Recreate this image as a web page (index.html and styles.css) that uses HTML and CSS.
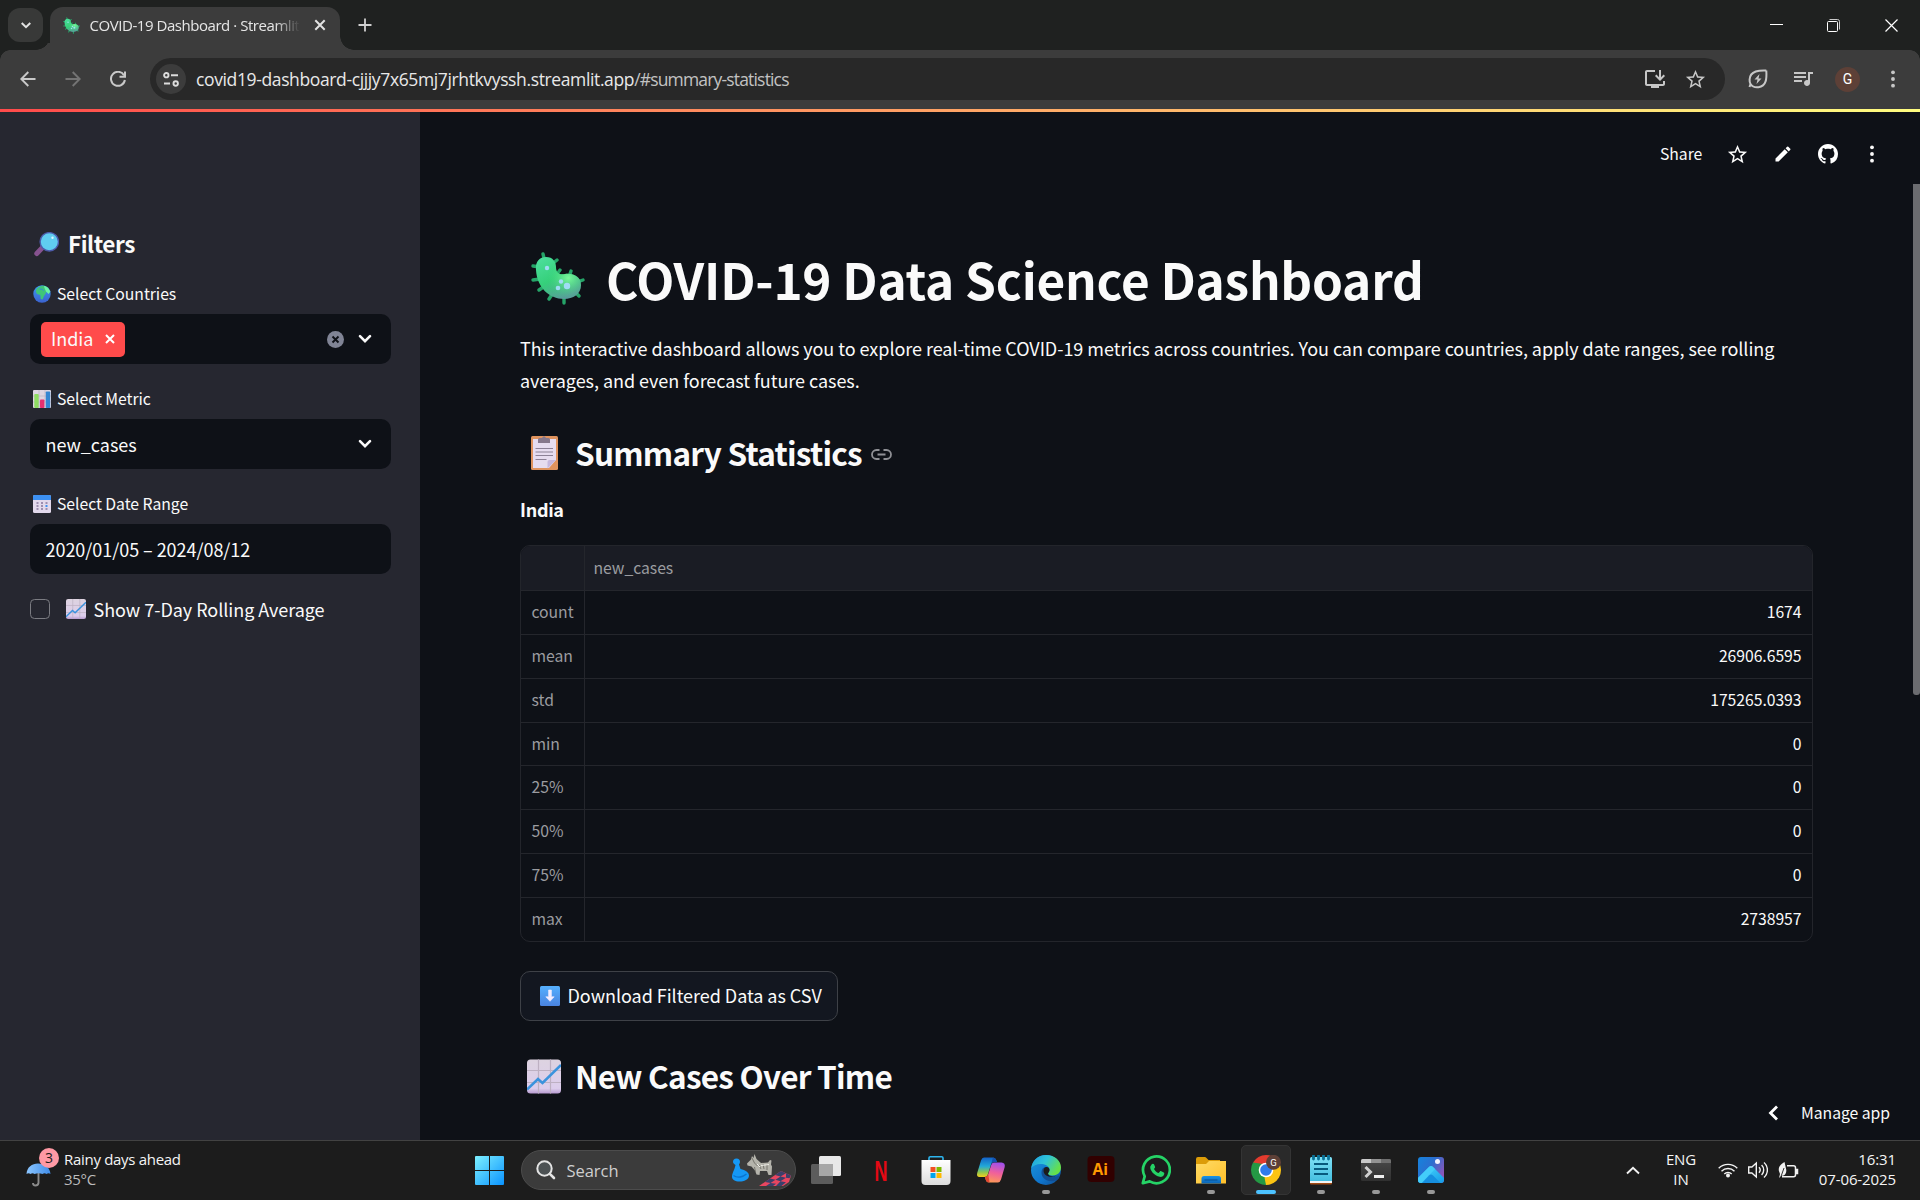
FILE: index.html
```html
<!DOCTYPE html>
<html lang="en">
<head>
<meta charset="utf-8">
<title>COVID-19 Dashboard · Streamlit</title>
<link rel="stylesheet" href="styles.css">
</head>
<body>
<svg class="defs" width="0" height="0">
  <defs>
    <linearGradient id="gGerm" x1="0" y1="0" x2=".6" y2="1"><stop offset="0" stop-color="#4fe0a0"/><stop offset=".55" stop-color="#35d07a"/><stop offset="1" stop-color="#5b9a9c"/></linearGradient>
    <radialGradient id="gGermLight" cx=".72" cy=".5" r=".5"><stop offset="0" stop-color="#7bf79a"/><stop offset="1" stop-color="#35d07a" stop-opacity="0"/></radialGradient>
    <linearGradient id="gPaper" x1="0" y1="0" x2="0" y2="1"><stop offset="0" stop-color="#ddd3e0"/><stop offset=".85" stop-color="#dccdec"/><stop offset="1" stop-color="#b79bd0"/></linearGradient>
    <linearGradient id="gGlobe" x1="0" y1="0" x2="0" y2="1"><stop offset="0" stop-color="#3d9af0"/><stop offset="1" stop-color="#3b62cf"/></linearGradient>
    <linearGradient id="gBlue" x1="0" y1="0" x2="0" y2="1"><stop offset="0" stop-color="#55b0ff"/><stop offset="1" stop-color="#4a83e0"/></linearGradient>
    <linearGradient id="gWin" x1="0" y1="0" x2="1" y2="1"><stop offset="0" stop-color="#7df0ff"/><stop offset="1" stop-color="#0a93ff"/></linearGradient>
    <linearGradient id="gFolder" x1="0" y1="0" x2="1" y2="1"><stop offset="0" stop-color="#ffdb66"/><stop offset="1" stop-color="#ffc02a"/></linearGradient>
    <linearGradient id="gTray" x1="0" y1="0" x2="0" y2="1"><stop offset="0" stop-color="#1a94e6"/><stop offset="1" stop-color="#0b63b5"/></linearGradient>
    <linearGradient id="gEdgeTop" x1="0" y1="0" x2="1" y2=".5"><stop offset="0" stop-color="#1d9fdf"/><stop offset=".5" stop-color="#2fc3d8"/><stop offset="1" stop-color="#66e04a"/></linearGradient>
    <linearGradient id="gEdgeLow" x1="0" y1="0" x2="1" y2="1"><stop offset="0" stop-color="#1b97dc"/><stop offset=".6" stop-color="#0f74cc"/><stop offset="1" stop-color="#114a8b"/></linearGradient>
    <linearGradient id="gCopA" x1="0" y1="0" x2="0" y2="1"><stop offset="0" stop-color="#1462c8"/><stop offset=".45" stop-color="#22a8d8"/><stop offset=".75" stop-color="#8cc651"/><stop offset="1" stop-color="#f5cf1c"/></linearGradient>
    <linearGradient id="gCopB" x1=".5" y1="0" x2=".3" y2="1"><stop offset="0" stop-color="#a250ea"/><stop offset=".5" stop-color="#f0609b"/><stop offset="1" stop-color="#fd9a55"/></linearGradient>
    <linearGradient id="gPhoto" x1="0" y1="0" x2="1" y2=".6"><stop offset="0" stop-color="#1583dd"/><stop offset=".5" stop-color="#2b6fd0"/><stop offset="1" stop-color="#8c55b8"/></linearGradient>
    <linearGradient id="gHill" x1="0" y1="0" x2="1" y2="1"><stop offset="0" stop-color="#4fdcff"/><stop offset="1" stop-color="#149ae8"/></linearGradient>
    <linearGradient id="gStore" x1="0" y1="0" x2="0" y2="1"><stop offset="0" stop-color="#ffffff"/><stop offset="1" stop-color="#dcdcdc"/></linearGradient>
    <linearGradient id="gTerm" x1="0" y1="0" x2="0" y2="1"><stop offset="0" stop-color="#4a4a4a"/><stop offset="1" stop-color="#303030"/></linearGradient>
    <linearGradient id="gNote" x1="0" y1="0" x2="0" y2="1"><stop offset="0" stop-color="#7ee0f5"/><stop offset="1" stop-color="#45bfe0"/></linearGradient>
    <linearGradient id="gUmb" x1="0" y1="0" x2="1" y2="0"><stop offset="0" stop-color="#8cc6ff"/><stop offset="1" stop-color="#3f8ce8"/></linearGradient>

    <symbol id="germ" viewBox="0 0 54 53">
      <g stroke="#25a468" stroke-width="3.4" stroke-linecap="round">
        <path d="M12 2l2 8M2 14l7 1M2 28l7-1M8 38l6-4M18 47l4-6M33 51l0-7M48 44l-5-5M52 28l-6 2M40 19l-2 6M29 18l-3 4M26 8l-5 4"/>
      </g>
      <path d="M5 18C4 9 9 5 15 5c7 0 10 5 10 10 0 6 3 8 9 7 9-1 16 3 16 11 0 9-8 14-17 14C18 47 6 35 5 18z" fill="url(#gGerm)"/>
      <path d="M5 18C4 9 9 5 15 5c7 0 10 5 10 10 0 6 3 8 9 7 9-1 16 3 16 11 0 9-8 14-17 14C18 47 6 35 5 18z" fill="url(#gGermLight)"/>
      <g fill="#9fdcf5"><circle cx="16" cy="16" r="2.2"/><circle cx="30" cy="29.5" r="2.2"/><circle cx="36" cy="34" r="3.2"/><circle cx="27" cy="36" r="2.3"/></g>
    </symbol>
    <symbol id="lens" viewBox="0 0 25 25">
      <path d="M9 15l-6.2 6.5" stroke="#86528f" stroke-width="5" stroke-linecap="round"/>
      <circle cx="15.3" cy="9.8" r="9.2" fill="#60cdf0" stroke="#4d5bab" stroke-width="1.4"/>
      <circle cx="18.5" cy="5.8" r="1.2" fill="#d5f6ff"/>
    </symbol>
    <symbol id="globe" viewBox="0 0 18 18">
      <circle cx="9" cy="9" r="8.7" fill="url(#gGlobe)"/>
      <path d="M3.500 4C5 2 8 .6 11 .8l1 2.500 1.500 3.500-1 2-1.500 2.200-1.500 3.500-1.800-.5-.4-4L4 9 2.800 6.500z" fill="#3fc679"/>
      <path d="M11 .8c3 .6 5.500 3 6.300 6l-1.800 2.200-2.500-2.500L11.500 3z" fill="#6cf5a4"/>
      <path d="M6.500 4l3 .3 1 1.500" stroke="#3a86dd" fill="none"/>
    </symbol>
    <symbol id="bars" viewBox="0 0 18 18">
      <rect width="18" height="18" rx="1" fill="#ddd6e2"/>
      <path d="M6 0v18M12 0v18M0 6h18M0 12h18" stroke="#c2b8c8" stroke-width=".8"/>
      <rect x="1.300" y="4" width="4.400" height="14" rx=".8" fill="#8fdc62"/>
      <rect x="7" y="9.500" width="4.400" height="8.500" rx=".8" fill="#e5306f"/>
      <rect x="12.800" y="1.500" width="4.400" height="16.500" rx=".8" fill="#3486d2"/>
    </symbol>
    <symbol id="calendar" viewBox="0 0 18 18">
      <rect width="18" height="18" rx="1.500" fill="#e2d9ec"/>
      <path d="M0 5V1.500A1.500 1.500 0 011.500 0h15A1.500 1.500 0 0118 1.500V5z" fill="#3c90f2"/>
      <g fill="#9d8fb0"><path d="M3.500 7h2v2h-2zM8 7h2v2H8zM3.500 10h2v2h-2zM8 10h2v2H8zM12.500 7h2v2h-2zM3.500 13h2v2h-2zM8 13h2v2H8zM12.500 13h2v2h-2z"/></g>
      <path d="M12.500 10h2v2h-2z" fill="#3c90f2"/>
    </symbol>
    <symbol id="chart" viewBox="0 0 34 34">
      <rect width="34" height="34" rx="3.500" fill="url(#gPaper)"/>
      <path d="M11.500 0v34M23.500 0v34M0 11h34M0 23h34" stroke="#bdb0c2" stroke-width="1.200"/>
      <path d="M0 30l11-10.500 4.500 4L34 5.500" fill="none" stroke="#3b93dd" stroke-width="2.500"/>
    </symbol>
    <symbol id="clipboard" viewBox="0 0 27 35">
      <rect y="1" width="27" height="34" rx="1.500" fill="#df935e"/>
      <path d="M2 4h23v21l-7 8H2z" fill="#e6dcef"/>
      <path d="M25 25l-8.500 8.500V27q0-2 2-2z" fill="#c6b7dd"/>
      <path d="M7 8V4.500Q7 3 8.500 3H11q2-3.500 4 0h2.500Q19 3 19 4.500V8z" fill="#86788c"/>
      <path d="M4.500 13.500h17.500M4.500 17h17.500M4.500 20.500h17.500M4.500 24.500h11" stroke="#8c8196" stroke-width="1.100"/>
    </symbol>
    <symbol id="download" viewBox="0 0 20 20">
      <rect width="20" height="20" rx="1.500" fill="url(#gBlue)"/>
      <path d="M8.600 4h2.800v6.800h2.800L10 15.300 5.800 10.800h2.800z" fill="#f3edff" stroke="#f3edff" stroke-width=".6" stroke-linejoin="round"/>
    </symbol>
    <symbol id="star" viewBox="0 0 24 24"><path d="M22 9.240l-7.190-.62L12 2 9.190 8.630 2 9.240l5.460 4.730L5.820 21 12 17.270 18.180 21l-1.630-7.030L22 9.240zM12 15.400l-3.760 2.270 1-4.280-3.320-2.880 4.380-.38L12 6.100l1.710 4.040 4.380.38-3.320 2.880 1 4.280L12 15.400z" fill="currentColor"/></symbol>
    <symbol id="dots" viewBox="0 0 24 24"><g fill="currentColor"><circle cx="12" cy="4" r="2.300"/><circle cx="12" cy="12" r="2.300"/><circle cx="12" cy="20" r="2.300"/></g></symbol>
    <symbol id="chevron" viewBox="0 0 14 10"><path d="M2 2.200l5 5 5-5" fill="none" stroke="currentColor" stroke-width="2.600" stroke-linecap="round"/></symbol>
  </defs>
</svg>

<header class="tabstrip">
  <button class="tab-search"><svg width="12" height="9" viewBox="0 0 14 10"><path d="M2 2l5 5 5-5" fill="none" stroke="#e3e3e3" stroke-width="2.300"/></svg></button>
  <div class="tab">
    <svg width="17" height="17"><use href="#germ"/></svg>
    <span class="tab-title">COVID-19 Dashboard · Streamlit</span>
    <svg class="tab-close" width="12" height="12" viewBox="0 0 12 12"><path d="M1.300 1.300l9.400 9.400M10.700 1.300l-9.400 9.400" stroke="#e3e3e3" stroke-width="2"/></svg>
  </div>
  <svg class="tab-new" width="14" height="14" viewBox="0 0 14 14"><path d="M7 .5v13M.5 7h13" stroke="#d0d0d0" stroke-width="1.800"/></svg>
  <div class="window-controls">
    <span><svg width="13" height="13" viewBox="0 0 13 13"><path d="M0 5.500h13" stroke="#fff"/></svg></span>
    <span><svg width="13" height="13" viewBox="0 0 13 13"><path d="M2.500.5h8q2 0 2 2v8" fill="none" stroke="#ccc"/><rect x=".5" y="2.500" width="10" height="10" rx="1" fill="none" stroke="#fff"/></svg></span>
    <span><svg width="13" height="13" viewBox="0 0 13 13"><path d="M.5.5l12 12M12.500.5l-12 12" stroke="#fff" stroke-width="1.200"/></svg></span>
  </div>
</header>

<nav class="toolbar">
  <div class="nav-icons">
    <span><svg width="16" height="16" viewBox="0 0 16 16"><path d="M15.500 8H1.500M8.300 1L1.300 8l7 7" fill="none" stroke="#c9c9c9" stroke-width="1.900"/></svg></span>
    <span><svg width="16" height="16" viewBox="0 0 16 16"><path d="M.5 8h14M7.700 1l7 7-7 7" fill="none" stroke="#747474" stroke-width="1.900"/></svg></span>
    <span><svg width="16" height="16" viewBox="0 0 16 16"><path d="M14 4.200A7 7 0 1014.900 9M15 .5v5.300H9.500" fill="none" stroke="#c9c9c9" stroke-width="2"/></svg></span>
  </div>
  <div class="omnibox">
    <span class="site-info"><svg width="16" height="15" viewBox="0 0 16 15"><g fill="none" stroke="#dcdcdc" stroke-width="1.900"><circle cx="3.300" cy="3.200" r="2.200"/><path d="M8 3.200h7M1 11.500h6"/><circle cx="12.700" cy="11.500" r="2.200"/></g></svg></span>
    <span class="url">covid19-dashboard-cjjjy7x65mj7jrhtkvyssh.streamlit.app<span class="url-path">/#summary-statistics</span></span>
    <span class="omni-icon"><svg width="24" height="24" viewBox="0 0 24 24"><path d="M20 17H4V5h8V3H4c-1.100 0-2 .9-2 2v12c0 1.100.9 2 2 2h4v2h8v-2h4c1.100 0 2-.9 2-2v-3h-2v3zM17 14l5-5-1.410-1.410L18 10.170V3h-2v7.170l-2.590-2.580L12 9l5 5z" fill="#c7c7c7"/></svg></span>
    <span class="omni-icon"><svg width="23" height="23"><use href="#star"/></svg></span>
  </div>
  <div class="tool-icons">
    <span><svg width="20" height="20" viewBox="0 0 20 20"><path d="M18.300 1.500C12 1.200 2 1.500 1.600 10.500c-.1 1.800.3 3.500.9 4.600L1.500 18M2.500 15c2 3 5.500 3.500 8 3.200 8-1 8.300-9 7.800-16.700" fill="none" stroke="#c7c7c7" stroke-width="2"/><path d="M11.500 5L6.500 10.500h3L8.500 15l5-5.500h-3z" fill="#c7c7c7"/></svg></span>
    <span><svg width="24" height="24" viewBox="0 0 24 24"><path d="M15 5H3v2h12V5zm0 4H3v2h12V9zM3 15h8v-2H3v2zM17 5v8.180c-.31-.11-.65-.18-1-.18-1.660 0-3 1.340-3 3s1.340 3 3 3 3-1.340 3-3V7h3V5h-5z" fill="#c7c7c7"/></svg></span>
    <span><b class="avatar">G</b></span>
    <span><svg width="20" height="20"><use href="#dots"/></svg></span>
  </div>
</nav>
<div class="decoration"></div>

<div class="app">
  <aside class="sidebar">
    <h2 class="side-title"><svg width="25" height="25"><use href="#lens"/></svg><span>Filters</span></h2>

    <div class="label"><svg width="18" height="18"><use href="#globe"/></svg><span>Select Countries</span></div>
    <div class="field">
      <span class="tag"><span>India</span><svg width="10" height="10" viewBox="0 0 10 10"><path d="M1 1l8 8M9 1L1 9" stroke="#fff" stroke-width="2"/></svg></span>
      <svg class="clear" width="17" height="17" viewBox="0 0 17 17"><circle cx="8.500" cy="8.500" r="8.500" fill="#808495"/><path d="M5.500 5.500l6 6M11.500 5.500l-6 6" stroke="#0e1117" stroke-width="1.900"/></svg>
      <svg class="chev" width="14" height="10"><use href="#chevron"/></svg>
    </div>

    <div class="label"><svg width="18" height="18"><use href="#bars"/></svg><span>Select Metric</span></div>
    <div class="field"><span class="value">new_cases</span><svg class="chev" width="14" height="10"><use href="#chevron"/></svg></div>

    <div class="label"><svg width="18" height="18"><use href="#calendar"/></svg><span>Select Date Range</span></div>
    <div class="field"><span class="value">2020/01/05 – 2024/08/12</span></div>

    <div class="check"><i class="box"></i><svg width="20" height="20"><use href="#chart"/></svg><span>Show 7-Day Rolling Average</span></div>
  </aside>

  <main class="main">
    <div class="app-actions">
      <span class="share">Share</span>
      <span class="act"><svg width="23" height="23"><use href="#star"/></svg></span>
      <span class="act"><svg width="20" height="20" viewBox="0 0 24 24"><path d="M3 17.250V21h3.750L17.810 9.940l-3.750-3.750L3 17.250zM20.710 7.040a1 1 0 000-1.410l-2.340-2.340a1 1 0 00-1.410 0l-1.830 1.830 3.750 3.750 1.830-1.830z" fill="#fff"/></svg></span>
      <span class="act"><svg width="20" height="20" viewBox="0 0 16 16"><path d="M8 0C3.580 0 0 3.580 0 8c0 3.540 2.290 6.530 5.470 7.590.4.070.55-.17.55-.38 0-.19-.01-.82-.01-1.490-2.010.37-2.530-.49-2.690-.94-.09-.23-.48-.94-.82-1.130-.28-.15-.68-.52-.01-.53.63-.01 1.080.58 1.230.82.72 1.210 1.870.87 2.330.66.07-.52.28-.87.51-1.070-1.780-.2-3.640-.89-3.640-3.950 0-.87.31-1.590.82-2.150-.08-.2-.36-1.020.08-2.120 0 0 .67-.21 2.200.82.64-.18 1.320-.27 2-.27.68 0 1.360.09 2 .27 1.530-1.040 2.200-.82 2.200-.82.44 1.100.16 1.920.08 2.120.51.56.82 1.270.82 2.150 0 3.070-1.870 3.750-3.650 3.950.29.25.54.73.54 1.480 0 1.070-.01 1.930-.01 2.200 0 .21.15.46.55.38A8.013 8.013 0 0016 8c0-4.420-3.580-8-8-8z" fill="#fff"/></svg></span>
      <span class="act"><svg width="20" height="20"><use href="#dots"/></svg></span>
    </div>

    <div class="content">
      <h1><svg width="54" height="53"><use href="#germ"/></svg><span>COVID-19 Data Science Dashboard</span></h1>
      <p class="intro">This interactive dashboard allows you to explore real-time COVID-19 metrics across countries. You can compare countries, apply date ranges, see rolling<br>averages, and even forecast future cases.</p>
      <h2 class="section s-summary"><svg width="27" height="35"><use href="#clipboard"/></svg><span class="t-summary">Summary Statistics</span>
        <svg class="anchor" width="21" height="11" viewBox="0 0 21 11"><path d="M8.500 1H5.500a4.500 4.500 0 000 9h3M12.500 1h3a4.500 4.500 0 010 9h-3M6.500 5.500h8" fill="none" stroke="#8f9095" stroke-width="1.800"/></svg></h2>
      <p class="country">India</p>

      <div class="table">
        <div class="row head"><span class="idx"></span><span class="col">new_cases</span></div>
        <div class="row"><span class="idx">count</span><span class="num">1674</span></div>
        <div class="row"><span class="idx">mean</span><span class="num">26906.6595</span></div>
        <div class="row"><span class="idx">std</span><span class="num">175265.0393</span></div>
        <div class="row"><span class="idx">min</span><span class="num">0</span></div>
        <div class="row"><span class="idx">25%</span><span class="num">0</span></div>
        <div class="row"><span class="idx">50%</span><span class="num">0</span></div>
        <div class="row"><span class="idx">75%</span><span class="num">0</span></div>
        <div class="row"><span class="idx">max</span><span class="num">2738957</span></div>
      </div>

      <button class="download"><svg width="20" height="20"><use href="#download"/></svg><span>Download Filtered Data as CSV</span></button>
      <h2 class="section s-new"><svg width="34" height="35"><use href="#chart"/></svg><span class="t-new">New Cases Over Time</span></h2>
    </div>
    <div class="scrollbar"></div>
    <div class="manage"><svg width="11" height="16" viewBox="0 0 11 16"><path d="M9 1.500L2.500 8 9 14.500" fill="none" stroke="#fff" stroke-width="2.800"/></svg><span>Manage app</span></div>
  </main>
</div>

<footer class="taskbar">
  <div class="weather">
    <div class="umbrella">
      <svg width="25" height="25" viewBox="0 0 25 25"><path d="M12.500 10v11q-.5 2.500-3 2.500T7 21" fill="none" stroke="#8b8b8b" stroke-width="1.900"/><path d="M.5 12C1 5 6 1.500 12 1.500S24 5 24.500 12q-2-1.500-4 0-2-1.500-4 0-4-1.500-8 0-2-1.500-4 0-2-1.500-4 0z" fill="url(#gUmb)"/></svg>
      <b class="badge">3</b>
    </div>
    <div class="weather-text"><span class="w1">Rainy days ahead</span><span class="w2">35°C</span></div>
  </div>

  <div class="start"><svg width="29" height="29" viewBox="0 0 29 29"><path d="M0 1q0-1 1-1h13v14H0zM15 0h13q1 0 1 1v13H15zM0 15h14v14H1q-1 0-1-1zM15 15h14v13q0 1-1 1H15z" fill="url(#gWin)"/></svg></div>
  <div class="search">
    <svg width="20" height="20" viewBox="0 0 20 20"><circle cx="8.500" cy="8.500" r="7.200" fill="#4d5254" stroke="#e4e4e4" stroke-width="2"/><path d="M13.800 13.800l4.200 4.200" stroke="#e4e4e4" stroke-width="2.600" stroke-linecap="round"/></svg>
    <span>Search</span>
    <svg class="pieces" width="62" height="34" viewBox="0 0 62 34">
      <path d="M3 9a3.500 3.500 0 117 0c0 1-.5 1.800-1 2.500l1.500 4.500c5 1 8.500 3.500 8.500 6.500 0 4-5 6-9.500 6S2 27 2 23.500C2 20 4.500 17 5.500 12 4 11 3 10 3 9z" fill="#1598f5"/>
      <path d="M3.500 22.500c4 3 9.500 1.500 13-1.500" stroke="#0b74cf" fill="none" stroke-width="1.300"/>
      <path d="M17 10.500l4-4 1-3.500 1.500 2L24.500 1l2 5 4.500 4 7-.5 2-2.500 1.500.5-.5 4 1 2-.5 8.500h-3l-1.500-4-7 0-.5 4-3-.5-1.500-4-3.500-4-4-1z" fill="#b5b4ac"/>
      <path d="M22 5l2.500 5 3 3M29 12l2 4M33 11l1 5M37 11l0 6M24.500 14l1 5" stroke="#6f6e68" stroke-width=".9" fill="none"/>
      <path d="M27 11l3 3M31 12.500l8-1" stroke="#efeee8" stroke-width="1" fill="none"/>
      <path d="M29 33L51 18l10 4.500-2 6.500-6 4z" fill="#e84660"/>
      <path d="M51 18l5 2.200-5.500 3.300-5.500-1.500zM40 25.500l5.500 1.300-5 3.200-5.500-1zM50.500 23.500l5.500 1.300-5.500 3.400-5-1.400zM40.500 30l5.500.8-3 2.200h-7zM50.500 28.200l5.500 1-4.500 3.800h-5.500zM56 20.200l5 2.300-1.500 2.800-3.500-.5z" fill="#3a406b"/>
    </svg>
  </div>
  <div class="apps">
    <div class="app-cell"><svg width="30" height="30" viewBox="0 0 30 30"><rect x="8" y="1" width="22" height="20" rx="1.500" fill="#e8e8e8"/><rect x="0" y="9" width="22" height="20" rx="1.500" fill="#5c5c5c"/><rect x="8" y="9" width="14" height="12" fill="#a7a7a7"/></svg></div>
    <div class="app-cell"><svg width="40" height="46" viewBox="-5 -8 40 46"><text class="netflix" x="8.500" y="25.500" textLength="13" lengthAdjust="spacingAndGlyphs">N</text></svg></div>
    <div class="app-cell"><svg width="30" height="30" viewBox="0 0 30 30"><path d="M8 7V3q0-1.300 1.300-1.300h11.400Q22 1.700 22 3v4" fill="none" stroke="#2db5ee" stroke-width="1.600"/><path d="M.5 5h29v21q0 4-4 4h-21q-4 0-4-4z" fill="url(#gStore)"/><path d="M9.500 12h5v5h-5z" fill="#f25022"/><path d="M15.500 12h5v5h-5z" fill="#7fba00"/><path d="M9.500 18h5v5h-5z" fill="#00a4ef"/><path d="M15.500 18h5v5h-5z" fill="#ffb900"/></svg></div>
    <div class="app-cell"><svg width="30" height="30" viewBox="0 0 30 30"><path d="M8 2.500h9q2.500 0 3.200 2.500l.6 2h-3q-2 0-2.700 2.300L12 19q-1 3-3.500 3H3.500Q.3 22 1.200 18L5 5.500Q6 2.500 8 2.500z" fill="url(#gCopA)"/><path d="M22 27.500h-9q-2.500 0-3.200-2.500L9 22q2.500 0 3.300-3L15.200 10Q16 7 18.500 7.500h7q4 .3 3.200 4.500L25 24.500q-1 3-3 3z" fill="url(#gCopB)"/><path d="M17 2.500q2.500 0 3.200 2.500l.6 2.300h-3.500q-1.500 0-2.300 2z" fill="#1352b0"/><path d="M9 22q2.500 0 3.300-3l1.200 8.500q-3 0-3.700-2.500z" fill="#e34632"/></svg></div>
    <div class="app-cell run"><svg width="30" height="30" viewBox="0 0 30 30"><circle cx="15" cy="15" r="15" fill="url(#gEdgeLow)"/><path d="M.3 13C1.500 5 7.500 0 15 0c9 0 15 6 15 12.500 0 5-4 8-8.500 8-3 0-4.500-1-4.500-2s1.500-1.500 1.500-4S15.500 9.500 11 9C6 8.700 2 10.500.3 13z" fill="url(#gEdgeTop)"/><path d="M18.300 14c-3-4-8-1.500-7.800 4 .3 6 7 10.500 15.500 7 2-1.200 3-3.500 2-4.500-2 1.500-11 3.500-11-2 0-1 1.700-2 1.300-4.500z" fill="#124f94"/><path d="M18.500 15c0-2-2-3.500-4-2.700-2.500 1-2.500 5-.5 7.200 2.500 2.700 8 3 11.500 1.300-5 1-8.700-.3-8.500-2.300 0-1 1.500-1.500 1.500-3.500z" fill="#1c1c1c"/></svg></div>
    <div class="app-cell"><svg width="30" height="30" viewBox="0 0 30 30"><rect x="1.500" y="1" width="27" height="26" rx="4" fill="#310000"/><text class="ai" x="6.500" y="19.500">Ai</text></svg></div>
    <div class="app-cell"><svg width="30" height="30" viewBox="0 0 30 30"><path d="M1.800 28.200L3.700 21.300A13.400 13.400 0 1 1 8.700 26.400z" fill="none" stroke="#25d366" stroke-width="2.700" stroke-linejoin="round"/><path transform="translate(5.200 5) scale(.82)" d="M6.500 5.500C7.500 4 9 4.300 9.500 5.300l1.300 3c.3.8-.3 1.500-1.300 2.700 1.200 2.400 3.200 4 5.600 5l1.700-2c.5-.6 1-.5 1.600-.2l3 1.500c.8.4.8 1 .5 2-.8 2.500-3 3.700-5.500 3.200C10 19.300 4 12.500 5 8z" fill="#25d366"/></svg></div>
    <div class="app-cell run"><svg width="30" height="30" viewBox="0 0 30 30"><path d="M0 4q0-2 2-2h7q1 0 2 1.500L12.500 5H24v6H0z" fill="#dc9c08"/><path d="M0 9h10l3-3h17v22.500H0z" fill="url(#gFolder)"/><path d="M5.500 28.500v-5q0-2.500 2.500-2.500h14.500q2.500 0 2.500 2.500v5z" fill="url(#gTray)"/><path d="M8.500 25h13" stroke="#0a559c" stroke-width="1.200"/></svg></div>
    <div class="app-cell active"><svg width="30" height="30" viewBox="0 0 30 30"><path d="M15 15L2.010 7.500A15 15 0 0 1 27.990 7.500z" fill="#e33b2e"/><path d="M15 15L27.990 7.500A15 15 0 0 1 15 30z" fill="#fcc413"/><path d="M15 15L15 30A15 15 0 0 1 2.010 7.500z" fill="#249944"/><path d="M15 8h12.900L15 15z" fill="#e33b2e"/><path d="M21 18.500L15 30 13 20z" fill="#fcc413"/><path d="M8.900 18.500L2.010 7.500 12 9z" fill="#249944"/><circle cx="15" cy="15" r="7.300" fill="#fff"/><circle cx="15" cy="15" r="5.800" fill="#2f7bea"/><circle cx="22.500" cy="7.300" r="7.500" fill="#5d4037"/><text class="mini-g" x="22.500" y="10.700" text-anchor="middle">G</text></svg></div>
    <div class="app-cell run"><svg width="30" height="30" viewBox="0 0 30 30"><path d="M4 26h22v2.500q0 1-1 1H5q-1 0-1-1z" fill="#a24a12"/><path d="M4 24h22v4H4z" fill="#f3f3f3"/><path d="M4 3.500q0-1.500 1.500-1.500h19Q26 2 26 3.500V26H4z" fill="url(#gNote)"/><path d="M8 9h14M8 14h14M8 19h14" stroke="#075a7d" stroke-width="2"/><path d="M7.500.5v3.500M12.500.5v3.500M17.500.5v3.500M22.500.5v3.500" stroke="#0b7297" stroke-width="2.800" stroke-linecap="round"/></svg></div>
    <div class="app-cell run"><svg width="30" height="30" viewBox="0 0 30 30"><rect y="4" width="30" height="22" rx="1.500" fill="url(#gTerm)"/><path d="M0 8V5.500Q0 4 1.500 4H10v4z" fill="#c9c9c9"/><path d="M10 4h10v4H10z" fill="#939393"/><path d="M20 4h8.500Q30 4 30 5.500V8H20z" fill="#6f6f6f"/><path d="M4.500 12l5 5-5 5" fill="none" stroke="#d0d0d0" stroke-width="3"/><path d="M13 20h10v3H13z" fill="#eee"/></svg></div>
    <div class="app-cell run"><svg width="30" height="30" viewBox="0 0 30 30"><rect x="2" y="2" width="26" height="26" rx="3" fill="url(#gPhoto)"/><path d="M2 23L13 12q2-2 4 0l11 11v2q0 3-3 3H5q-3 0-3-3z" fill="url(#gHill)"/><path d="M2 23L13 12q2-2 4 0l2 2L5.500 28Q2 28 2 25z" fill="#43cdfa"/><path d="M13 20.500q2-2 4 0l7.500 7.500H6z" fill="#168fe0"/><circle cx="21.500" cy="6.500" r="2.500" fill="#f2f4ff"/></svg></div>
  </div>

  <div class="tray">
    <svg class="tray-up" width="14" height="9" viewBox="0 0 14 9"><path d="M1 7.500l6-5.700 6 5.700" fill="none" stroke="#f2f2f2" stroke-width="1.900"/></svg>
    <div class="lang"><span>ENG</span><span>IN</span></div>
    <svg class="wifi" width="20" height="16" viewBox="0 0 20 16"><g fill="none" stroke="#f2f2f2" stroke-width="1.400"><path d="M.7 6.200a13.200 13.200 0 0118.600 0"/><path d="M3.500 9.200a9.200 9.200 0 0113 0"/><path d="M6.300 12a5.300 5.300 0 017.400 0"/></g><circle cx="10" cy="13.500" r="2" fill="#f2f2f2"/></svg>
    <svg class="sound" width="20" height="18" viewBox="0 0 20 18"><g fill="none" stroke="#f2f2f2" stroke-width="1.400"><path d="M.7 6h3.200L8.300 2v14l-4.400-4H.7z"/><path d="M11 6.300a4 4 0 010 5.400M13.600 4a7 7 0 010 10M16 1.500a10 10 0 010 15"/></g></svg>
    <svg class="battery" width="21" height="17" viewBox="0 0 21 17"><path d="M9 3.700h6.500q2 0 2 2v7q0 2-2 2H4M18.500 7.500h1v4h-1z" fill="none" stroke="#f2f2f2" stroke-width="1.500"/><path d="M6.500 0C2 3 .5 5 .8 8.500L2 12l-1 4 2-2c4 0 5.500-3 5.300-6z" fill="#f2f2f2"/><path d="M3 14.500L6 6" stroke="#1c1c1c" stroke-width=".9"/></svg>
    <div class="clock"><span class="time">16:31</span><span>07-06-2025</span></div>
  </div>
</footer>
</body>
</html>
```
FILE: styles.css
```css
* { box-sizing: border-box; }
body {
  margin: 0;
  width: 1920px;
  height: 1200px;
  overflow: hidden;
  display: flex;
  flex-direction: column;
  background: #0e1117;
  color: #fafafa;
  font-family: "Noto Sans CJK SC", "Open Sans", sans-serif;
  letter-spacing: -0.045px;
  white-space: nowrap;
}
svg { display: block; flex: none; }
.defs { position: absolute; }
h1, h2, p { margin: 0; }
button { margin: 0; padding: 0; border: 0; font: inherit; color: inherit; letter-spacing: inherit; }

/* Browser chrome */
.tabstrip, .toolbar, .taskbar { font-family: "Open Sans", "Noto Sans", sans-serif; }
.tabstrip {
  height: 50px;
  flex: none;
  display: flex;
  align-items: center;
  background: #1f2120;
  padding-left: 8px;
}
.tab-search {
  width: 35px;
  height: 34px;
  border-radius: 12px;
  background: #383938;
  display: flex;
  align-items: center;
  justify-content: center;
}
.tab {
  position: relative;
  align-self: flex-end;
  width: 290px;
  height: 43px;
  margin-left: 7px;
  padding: 0 14px 7px 13px;
  display: flex;
  align-items: center;
  background: #3c3c3c;
  border-radius: 13px 13px 0 0;
}
.tab::before, .tab::after {
  content: "";
  position: absolute;
  bottom: 0;
  width: 14px;
  height: 14px;
}
.tab::before { left: -14px; background: radial-gradient(circle at 0 0, #1f2120 13.500px, #3c3c3c 14px); clip-path: inset(7px 0 0 0); }
.tab::after { right: -14px; background: radial-gradient(circle at 100% 0, #1f2120 13.500px, #3c3c3c 14px); }
.tab-title {
  width: 210px;
  margin-left: 9.500px;
  padding-bottom: 1px;
  overflow: hidden;
  font-size: 15px;
  letter-spacing: -0.45px;
  color: #e6e6e6;
  -webkit-mask-image: linear-gradient(90deg, #000 185px, transparent 210px);
  mask-image: linear-gradient(90deg, #000 185px, transparent 210px);
}
.tab-close { margin-left: 15px; }
.tab-new { margin-left: 18px; }
.window-controls { margin-left: auto; display: flex; }
.window-controls span { width: 57.500px; display: flex; justify-content: center; }

.toolbar {
  height: 59px;
  flex: none;
  display: flex;
  align-items: flex-start;
  padding: 8px 5px 0;
  background:
    radial-gradient(circle at 10px 10px, #3c3c3c 9.500px, #1f2120 10px) 0 0 / 10px 10px no-repeat,
    radial-gradient(circle at 0 10px, #3c3c3c 9.500px, #1f2120 10px) 100% 0 / 10px 10px no-repeat,
    #3c3c3c;
}
.nav-icons, .tool-icons { display: flex; height: 42px; align-items: center; color: #c7c7c7; }
.nav-icons span, .tool-icons span { width: 45px; display: flex; justify-content: center; }
.omnibox {
  width: 1575px;
  height: 42px;
  margin: 0 10px;
  padding: 0 10px 0 6px;
  display: flex;
  align-items: center;
  border-radius: 21px;
  background: #282828;
  color: #c7c7c7;
}
.site-info {
  width: 30px;
  height: 30px;
  border-radius: 50%;
  background: #3c3c3c;
  display: flex;
  align-items: center;
  justify-content: center;
}
.url { flex: 1; margin-left: 10px; font-size: 17.500px; letter-spacing: -0.37px; color: #e8e8e8; }
.url-path { color: #c2c2c2; letter-spacing: -0.83px; }
.omni-icon { width: 40px; display: flex; justify-content: center; }
.avatar {
  width: 25px;
  height: 25px;
  border-radius: 50%;
  background: #5d4037;
  color: #fff;
  font: 400 14px/25px Roboto, sans-serif;
  text-align: center;
}
.decoration { height: 3px; flex: none; background: linear-gradient(90deg, #ff4b4b, #fffd80); }

/* Streamlit app */
.app { height: 1028px; flex: none; display: flex; }
.sidebar { width: 420px; padding: 115px 29px 0 30px; background: #262730; }
.side-title {
  height: 34px;
  padding-left: 4px;
  display: flex;
  align-items: center;
  gap: 9px;
  font-size: 22.500px;
  line-height: 32px;
  font-weight: 700;
  letter-spacing: -0.45px;
}
.side-title span { padding-bottom: 2px; }
.label {
  height: 24px;
  margin-bottom: 8px;
  padding-left: 3px;
  display: flex;
  align-items: center;
  gap: 6px;
  font-size: 15.750px;
  line-height: 24px;
}
.side-title + .label { margin-top: 21px; }
.field {
  height: 50px;
  margin-bottom: 23px;
  padding: 0 19px 0 11px;
  display: flex;
  align-items: center;
  border-radius: 10px;
  background: #0e1117;
}
.tag {
  width: 84px;
  height: 35px;
  padding: 0 10px;
  display: flex;
  align-items: center;
  justify-content: space-between;
  border-radius: 5px;
  background: #ff4b4b;
  font-size: 18px;
}
.tag span { line-height: 33px; padding-bottom: 2px; }
.clear { margin-left: auto; margin-right: 14.500px; }
.chev { margin-left: auto; }
.clear + .chev { margin-left: 0; }
.value { margin-left: 4.500px; padding-bottom: 1px; font-size: 18px; line-height: 48px; }
.check { height: 30px; margin-top: 20px; display: flex; align-items: center; font-size: 18px; line-height: 30px; }
.field + .check { margin-top: -3.500px; }
.box { width: 20px; height: 20px; margin-right: 16px; border: 1px solid #7b7c82; border-radius: 4.500px; }
.check span { margin-left: 7.500px; }

.main { position: relative; width: 1500px; padding: 27px 0 0 100px; }
.app-actions { height: 30px; padding-right: 25px; display: flex; align-items: center; justify-content: flex-end; }
.share { width: 55px; font-size: 15.750px; line-height: 30px; }
.act { width: 45px; display: flex; justify-content: center; }
.act:last-child { padding-right: 1px; }
.content { width: 1293px; padding-top: 76px; }
h1 {
  height: 66px;
  padding-left: 11px;
  display: flex;
  align-items: center;
  font-size: 49.500px;
  line-height: 66px;
  font-weight: 700;
  letter-spacing: -0.22px;
}
h1 span { margin-left: 21px; padding-top: 1px; }
.intro { margin-top: 21px; font-size: 18px; line-height: 32px; }
.section { height: 42px; display: flex; align-items: center; font-size: 31.500px; line-height: 42px; font-weight: 700; letter-spacing: -0.75px; }
.s-summary { margin-top: 35px; padding-left: 11px; }
.s-new { margin-top: 34px; padding-left: 7px; }
.t-summary { margin-left: 17px; padding-bottom: 1px; }
.t-new { margin-left: 14px; padding-bottom: 2px; }
.anchor { margin: 4px 0 0 9px; }
.country { margin-top: 20px; font-size: 18px; line-height: 32px; font-weight: 700; letter-spacing: -0.3px; }

.table {
  height: 397px;
  margin-top: 20px;
  display: grid;
  grid-template-rows: 45px repeat(8, 43.850px);
  border: 1px solid #23252b;
  border-radius: 10px;
  overflow: hidden;
  font-size: 15.750px;
  line-height: 42px;
}
.row { display: flex; border-bottom: 1px solid #24262c; }
.row:last-child { border-bottom: 0; }
.head { background: #1a1c24; }
.idx { width: 64px; padding-left: 10.500px; border-right: 1px solid #24262c; color: #9b9ca0; }
.col { padding-left: 8.500px; line-height: 44px; color: #9b9ca0; }
.num { flex: 1; padding-right: 10.500px; text-align: right; }

.download {
  width: 318px;
  height: 50px;
  margin-top: 29px;
  padding-left: 19px;
  display: flex;
  align-items: center;
  gap: 7.500px;
  border: 1px solid #3e4147;
  border-radius: 10px;
  background: #131720;
  font-size: 18px;
  line-height: 46px;
}
.download span { padding-bottom: 2px; }
.scrollbar { position: absolute; right: 0; top: 72px; width: 7px; height: 511px; background: #6b6c70; border-radius: 0 0 3px 3px; }
.manage {
  position: absolute;
  right: 30px;
  bottom: 12px;
  height: 30px;
  display: flex;
  align-items: center;
  gap: 22px;
  font-size: 15.750px;
  line-height: 30px;
}

/* Windows taskbar */
.taskbar {
  height: 60px;
  flex: none;
  display: flex;
  align-items: center;
  padding-bottom: 1px;
  border-top: 1px solid #424242;
  background: #1c1c1c;
}
.weather { width: 448px; padding-left: 26px; display: flex; align-items: center; }
.umbrella { position: relative; width: 38px; height: 40px; padding-top: 12px; }
.badge {
  position: absolute;
  left: 13px;
  top: -2px;
  width: 20px;
  height: 20px;
  border-radius: 50%;
  background: #ff99a4;
  color: #1c1c1c;
  font-size: 14px;
  line-height: 20px;
  font-weight: 400;
  text-align: center;
}
.weather-text, .lang, .clock {
  display: flex;
  flex-direction: column;
  padding-bottom: 2px;
  font-size: 15px;
  line-height: 20px;
  color: #f5f5f5;
}
.weather-text { letter-spacing: -0.3px; }
.w2 { color: #bdbdbd; }
.start { width: 73px; padding-left: 27px; }
.search {
  width: 275px;
  height: 40px;
  padding-left: 14px;
  display: flex;
  align-items: center;
  border: 1px solid #4c4c4c;
  border-radius: 20px;
  background: #3b3b3b;
  font-size: 16.500px;
  color: #cfcfcf;
}
.search span { margin-left: 10.500px; }
.pieces { margin: 0 3px 0 auto; }
.apps { margin-left: 2.500px; display: flex; }
.app-cell { position: relative; width: 55px; height: 50px; display: flex; align-items: center; justify-content: center; }
.app-cell.active::before {
  content: "";
  position: absolute;
  inset: 0 2.500px;
  border: 1px solid #343434;
  border-radius: 5px;
  background: #2a2a2a;
}
.app-cell svg { position: relative; }
.run::after, .active::after {
  content: "";
  position: absolute;
  bottom: 1px;
  left: 23.500px;
  width: 8px;
  height: 4px;
  border-radius: 2px;
  background: #989898;
}
.active::after { left: 17.500px; width: 20px; background: #4cc2ff; }
.netflix { font: 700 30px "Liberation Sans", sans-serif; letter-spacing: 0; fill: #e50914; }
.ai { font: 700 15.500px "Open Sans", sans-serif; fill: #ff9a00; }
.mini-g { font: 400 9.500px Roboto, sans-serif; letter-spacing: 0; fill: #fff; }
.tray { margin-left: auto; padding-right: 24px; display: flex; align-items: center; }
.lang { width: 44px; margin-left: 19px; align-items: center; letter-spacing: -0.1px; }
.wifi { margin-left: 15px; }
.sound { margin-left: 10px; }
.battery { margin-left: 10px; }
.clock { width: 79px; margin-left: 18px; align-items: flex-end; letter-spacing: -0.1px; }
```
